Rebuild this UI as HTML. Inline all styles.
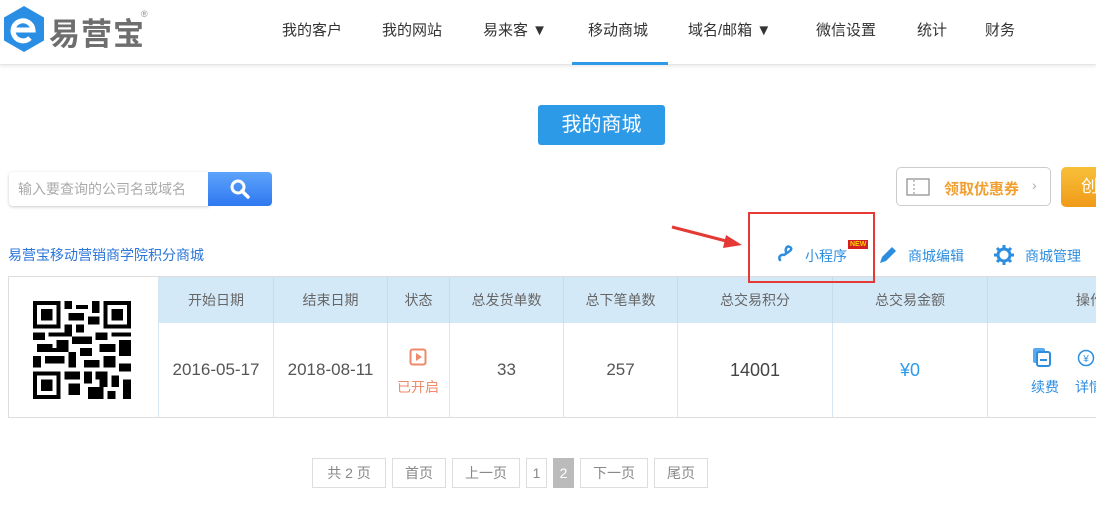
<!DOCTYPE html>
<html><head><meta charset="utf-8"><style>
*{margin:0;padding:0;box-sizing:border-box}
body{width:1096px;height:519px;overflow:hidden;background:#fff;font-family:"Liberation Sans","Noto Sans CJK SC",sans-serif;position:relative;color:#333}
.a{position:absolute;white-space:nowrap}
.nav{font-size:15px;color:#333;top:19px}
.th{position:absolute;top:277px;height:46px;line-height:46px;text-align:center;font-size:14px;color:#666;background:#d4e9f8;border-right:1px solid #c5dcec;white-space:nowrap;overflow:hidden}
.td{position:absolute;top:323px;height:94px;text-align:center;font-size:17px;color:#555;border-right:1px solid #d7e6f0;line-height:94px}
.pg{position:absolute;top:458px;height:30px;line-height:28px;border:1px solid #ddd;text-align:center;font-size:14px;color:#888}
</style></head><body>
<div class="a" style="left:0;top:0;width:1096px;height:65px;border-bottom:1px solid #e6e6e6;box-shadow:0 2px 3px #eee"></div>
<svg class="a" style="left:4px;top:6px" width="40" height="46" viewBox="0 0 40 46"><polygon points="20,0 40,11.5 40,34.5 20,46 0,34.5 0,11.5" fill="#2a8fe4"/><path d="M10 24 H29 A10 10 0 1 0 26 32" fill="none" stroke="#fff" stroke-width="5"/></svg>
<div class="a" style="left:49px;top:9px;font-size:31px;font-weight:bold;color:#6e6e6e;letter-spacing:1px">易营宝</div>
<div class="a" style="left:141px;top:9px;font-size:9px;color:#888">®</div>
<div class="nav a" style="left:282px">我的客户</div>
<div class="nav a" style="left:382px">我的网站</div>
<div class="nav a" style="left:483px">易来客 ▼</div>
<div class="nav a" style="left:588px">移动商城</div>
<div class="a" style="left:572px;top:62px;width:96px;height:3px;background:#2d9ae8"></div>
<div class="nav a" style="left:688px">域名/邮箱 ▼</div>
<div class="nav a" style="left:816px">微信设置</div>
<div class="nav a" style="left:917px">统计</div>
<div class="nav a" style="left:985px">财务</div>

<div class="a" style="left:538px;top:105px;width:127px;height:40px;background:#2d9ae8;border-radius:3px;color:#fff;font-size:20px;text-align:center;line-height:40px">我的商城</div>

<div class="a" style="left:9px;top:172px;width:200px;height:34px;border-radius:4px 0 0 4px;box-shadow:0 1px 3px #ccc;font-size:14px;color:#aaa;line-height:34px;padding-left:9px">输入要查询的公司名或域名</div>
<div class="a" style="left:208px;top:172px;width:64px;height:34px;border-radius:0 4px 4px 0;background:linear-gradient(#5ea3fb,#2f78f0)"></div>
<svg class="a" style="left:229px;top:178px" width="22" height="22"><circle cx="9" cy="9" r="6" fill="none" stroke="#fff" stroke-width="3"/><line x1="13" y1="13" x2="19" y2="19" stroke="#fff" stroke-width="3.5" stroke-linecap="round"/></svg>

<div class="a" style="left:896px;top:167px;width:155px;height:39px;border:1px solid #ccc;border-radius:5px"></div>
<svg class="a" style="left:906px;top:178px" width="24" height="18"><rect x="1" y="1" width="22" height="16" fill="none" stroke="#888" stroke-width="1.2"/><line x1="8" y1="2" x2="8" y2="16" stroke="#888" stroke-dasharray="2 2"/></svg>
<div class="a" style="left:944px;top:178px;font-size:15px;font-weight:bold;color:#f0a030">领取优惠券</div>
<div class="a" style="left:1032px;top:177px;font-size:14px;color:#aaa">›</div>
<div class="a" style="left:1061px;top:167px;width:40px;height:40px;border-radius:5px;background:linear-gradient(#f8c03a,#f09a18);color:#fff;font-size:17px;line-height:40px;padding-left:20px">创</div>

<div class="a" style="left:8px;top:245px;font-size:14px;color:#2a75d8">易营宝移动营销商学院积分商城</div>
<svg class="a" style="left:668px;top:222px" width="80" height="30"><line x1="4" y1="5" x2="62" y2="20" stroke="#e53935" stroke-width="3"/><polygon points="74,23 58,13 55,26" fill="#e53935"/></svg>
<svg class="a" style="left:777px;top:245px" width="18" height="18"><path d="M3 15 C1 12 4 9 7 10 L10 8 C13 6 16 4 13 2 C10 0 8 4 9 7" fill="none" stroke="#2d8ee0" stroke-width="2.5" stroke-linecap="round"/></svg>
<div class="a" style="left:805px;top:246px;font-size:14px;color:#2d8ee0">小程序</div>
<div class="a" style="left:848px;top:240px;background:#d32020;color:#ffd200;font-size:7px;font-weight:bold;padding:0 2px;line-height:9px">NEW</div>
<svg class="a" style="left:877px;top:244px" width="22" height="22"><path d="M3 19 L5 13 L15 3 L19 7 L9 17 Z" fill="#2d8ee0"/></svg>
<div class="a" style="left:908px;top:246px;font-size:14px;color:#2d8ee0">商城编辑</div>
<svg class="a" style="left:993px;top:244px" width="22" height="22"><circle cx="11" cy="11" r="6" fill="none" stroke="#2d8ee0" stroke-width="3"/><g stroke="#2d8ee0" stroke-width="3"><line x1="11" y1="1" x2="11" y2="21"/><line x1="1" y1="11" x2="21" y2="11"/><line x1="4" y1="4" x2="18" y2="18"/><line x1="18" y1="4" x2="4" y2="18"/></g><circle cx="11" cy="11" r="4.5" fill="#fff"/></svg>
<div class="a" style="left:1025px;top:246px;font-size:14px;color:#2d8ee0">商城管理</div>

<div class="a" style="left:8px;top:276px;width:1100px;height:142px;border:1px solid #ddd"></div>
<svg class="a" style="left:33px;top:301px" width="98" height="98" viewBox="0 0 25 25" shape-rendering="crispEdges">
<rect width="25" height="25" fill="#fff"/>
<g fill="#000">
<rect x="0" y="0" width="7" height="7"/><rect x="18" y="0" width="7" height="7"/><rect x="0" y="18" width="7" height="7"/>
<path d="M8 0h2v2h-2zM11 1h3v1h-3zM15 0h2v3h-2zM9 3h4v2h-4zM14 4h3v2h-3zM8 6h2v3h-2zM11 6h2v2h-2zM0 8h3v2h-3zM4 8h4v1h-4zM10 9h5v2h-5zM16 8h3v2h-3zM20 8h5v1h-5zM1 11h4v2h-4zM6 10h3v3h-3zM12 12h3v2h-3zM17 11h4v2h-4zM22 10h3v4h-3zM0 14h2v3h-2zM3 14h5v2h-5zM9 13h2v4h-2zM13 15h4v2h-4zM18 14h3v3h-3zM22 16h3v2h-3zM8 18h4v2h-4zM13 18h2v3h-2zM16 18h3v2h-3zM20 19h2v3h-2zM9 21h3v3h-3zM14 22h4v3h-4zM19 23h2v2h-2zM23 20h2v5h-2zM17 20h2v2h-2zM4 12h2v1h-2z"/>
</g>
<rect x="1" y="1" width="5" height="5" fill="#fff"/><rect x="19" y="1" width="5" height="5" fill="#fff"/><rect x="1" y="19" width="5" height="5" fill="#fff"/>
<rect x="2" y="2" width="3" height="3"/><rect x="20" y="2" width="3" height="3"/><rect x="2" y="20" width="3" height="3"/>
</svg>
<div class="a" style="left:158px;top:277px;width:1px;height:140px;background:#d7e6f0"></div>
<div class="th" style="left:159px;width:115px">开始日期</div>
<div class="th" style="left:274px;width:114px">结束日期</div>
<div class="th" style="left:388px;width:62px">状态</div>
<div class="th" style="left:450px;width:114px">总发货单数</div>
<div class="th" style="left:564px;width:114px">总下笔单数</div>
<div class="th" style="left:678px;width:155px">总交易积分</div>
<div class="th" style="left:833px;width:155px">总交易金额</div>
<div class="th" style="left:988px;width:120px;text-align:left;padding-left:88px">操作</div>
<div class="td" style="left:159px;width:115px">2016-05-17</div>
<div class="td" style="left:274px;width:114px">2018-08-11</div>
<div class="td" style="left:388px;width:62px"></div>
<svg class="a" style="left:409px;top:348px" width="18" height="18"><rect x="1.5" y="1.5" width="15" height="15" rx="2" fill="none" stroke="#ef8a6a" stroke-width="2"/><polygon points="7,5 13,9 7,13" fill="#ef8a6a"/></svg>
<div class="a" style="left:397px;top:377px;font-size:14px;color:#ef8a6a">已开启</div>
<div class="td" style="left:450px;width:114px">33</div>
<div class="td" style="left:564px;width:114px">257</div>
<div class="td" style="left:678px;width:155px;font-size:18px;color:#444">14001</div>
<div class="td" style="left:833px;width:155px;font-size:18px;color:#2d9ae8">¥0</div>
<svg class="a" style="left:1032px;top:347px" width="20" height="20"><rect x="1" y="1" width="12" height="15" rx="2" fill="#5aaaf0"/><rect x="5" y="5" width="13" height="14" rx="2" fill="#fff" stroke="#2d8ee0" stroke-width="2"/><rect x="8" y="12" width="7" height="2" fill="#2d8ee0"/></svg>
<div class="a" style="left:1031px;top:377px;font-size:14px;color:#2d8ee0">续费</div>
<svg class="a" style="left:1077px;top:348px" width="20" height="20"><circle cx="9" cy="10" r="7.5" fill="none" stroke="#2d8ee0" stroke-width="1.5"/><text x="9" y="14" font-size="10" fill="#2d8ee0" text-anchor="middle" font-family="Liberation Sans">¥</text></svg>
<div class="a" style="left:1075px;top:377px;font-size:14px;color:#2d8ee0">详情</div>

<div class="a" style="left:748px;top:212px;width:127px;height:71px;border:2px solid #e53935;z-index:5"></div>

<div class="pg" style="left:312px;width:74px">共 2 页</div>
<div class="pg" style="left:392px;width:54px">首页</div>
<div class="pg" style="left:452px;width:68px">上一页</div>
<div class="pg" style="left:526px;width:21px">1</div>
<div class="pg" style="left:553px;width:21px;background:#bbb;border-color:#bbb;color:#fff">2</div>
<div class="pg" style="left:580px;width:68px">下一页</div>
<div class="pg" style="left:654px;width:54px">尾页</div>
</body></html>
